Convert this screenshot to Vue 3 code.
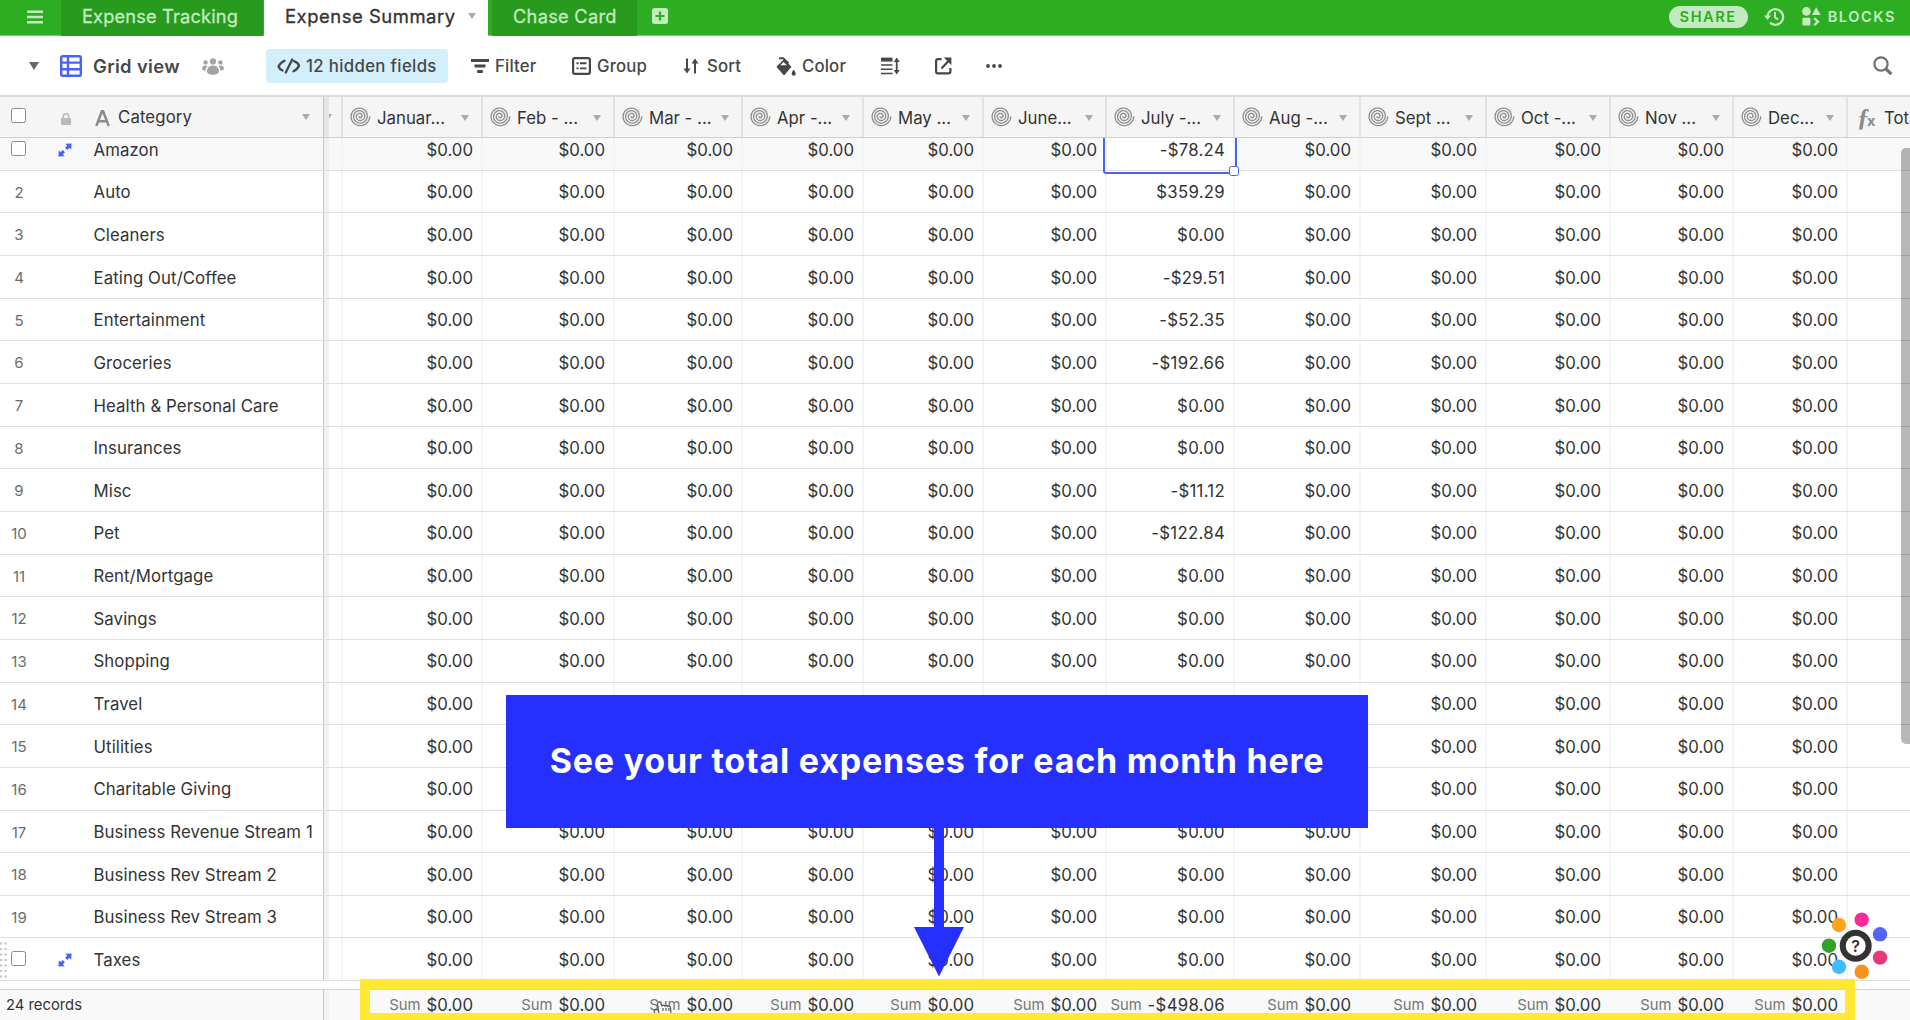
<script setup>
const months = ['Januar...', 'Feb - ...', 'Mar - ...', 'Apr -...', 'May ...', 'June...', 'July -...', 'Aug -...', 'Sept ...', 'Oct -...', 'Nov ...', 'Dec...']
const JULY = 6
const rows = [
  ['Amazon', '-$78.24'], ['Auto', '$359.29'], ['Cleaners'], ['Eating Out/Coffee', '-$29.51'],
  ['Entertainment', '-$52.35'], ['Groceries', '-$192.66'], ['Health & Personal Care'], ['Insurances'],
  ['Misc', '-$11.12'], ['Pet', '-$122.84'], ['Rent/Mortgage'], ['Savings'], ['Shopping'], ['Travel'],
  ['Utilities'], ['Charitable Giving'], ['Business Revenue Stream 1'], ['Business Rev Stream 2'],
  ['Business Rev Stream 3'], ['Taxes'],
].map(([name, july = '$0.00'], i) => ({ name, n: i + 1, hover: i === 0 || i === 19, july }))

const cell = (row, m) => (m === JULY ? row.july : '$0.00')

// Spiral, counter-clockwise, ending on the right-hand side
const spiral = (() => {
  const turns = 3.5
  const pts = []
  for (let i = 0; i <= 120; i++) {
    const u = i / 120
    const a = Math.PI - u * turns * 2 * Math.PI
    const r = 0.5 + 9.2 * Math.pow(u, 0.9)
    pts.push(`${(9.6 + r * Math.cos(a)).toFixed(2)} ${(10 + r * Math.sin(a)).toFixed(2)}`)
  }
  return 'M' + pts.join('L')
})()

const dots = [
  [1839, 925, '#fba51d'], [1861.7, 919.7, '#f82b9b'], [1880, 934.3, '#5464fb'], [1880, 957.6, '#e5397f'],
  [1861.7, 971.8, '#f7921c'], [1839, 966.8, '#43bcff'], [1829, 945.7, '#31a328'],
].map(([x, y, c]) => ({ x: x - 1815, y: y - 905, c }))
</script>

<template>
  <div class="app">
    <header class="top">
      <svg class="burger" width="16" height="14" viewBox="0 0 16 14"><path d="M0 1.7h16M0 7h16M0 12.3h16" /></svg>
      <div class="tab first">Expense Tracking</div>
      <div class="tab active"><span>Expense Summary</span><i class="tri" /></div>
      <div class="tab chase">Chase Card</div>
      <svg class="plus" width="16" height="16" viewBox="0 0 16 16"><rect width="16" height="16" rx="2.5" fill="#c3ebc0" /><path d="M8 3.5v9M3.5 8h9" stroke="#2dad22" stroke-width="2.2" /></svg>
      <div class="right">
        <div class="share">SHARE</div>
        <svg class="hist" width="21" height="20" viewBox="0 0 21 20" fill="none" stroke="#c3ebc0" stroke-width="2.3">
          <path d="M3.5 9.5A7.8 7.8 0 1 1 6 15.7" /><path d="M11 5v5.4l3.2 2" stroke-width="2" /><path d="M0 8.5h7.2L3.6 13z" fill="#c3ebc0" stroke="none" />
        </svg>
        <svg width="19" height="19" viewBox="0 0 19 19" fill="#c3ebc0">
          <circle cx="4.4" cy="4.4" r="4.3" /><path d="M14.2.3l4.5 7.8H9.8z" /><rect x=".4" y="10.8" width="8" height="7.8" rx=".8" /><path d="M12.2 11.2l3.7 3.5-3.7 3.5" fill="none" stroke="#c3ebc0" stroke-width="2.4" />
        </svg>
        <div class="blocks">BLOCKS</div>
      </div>
    </header>

    <nav class="bar">
      <i class="tri dark" />
      <svg class="gridico" width="22" height="22" viewBox="0 0 22 22" fill="none" stroke="#4a63f5" stroke-width="2.4"><rect x="1.2" y="1.2" width="19.6" height="19.6" rx="1.6" /><path d="M1 7.6h20M1 14.2h20M8 1v20" /></svg>
      <b class="view">Grid view</b>
      <svg class="people" width="22" height="17" viewBox="0 0 22 17" fill="#a3a3a3">
        <circle cx="11" cy="3.4" r="3.1" /><circle cx="3.6" cy="4.4" r="2.2" /><circle cx="18.4" cy="4.4" r="2.2" />
        <path d="M5 13.5C5 9.8 7.5 7.6 11 7.6s6 2.2 6 5.9C17 15.5 14.5 16.7 11 16.700s-6-1.2-6-3.2zM0 10.5C0 8.7 1.5 7.6 3.6 7.6c.9 0 1.500.2 2 .5C4.3 9.4 3.7 10.8 3.6 12.7 1.5 12.6 0 12 0 10.5zM22 10.5c0-1.8-1.5-2.9-3.6-2.900-.9 0-1.5.2-2 .5 1.3 1.3 1.9 2.7 2 4.6 2.1-.1 3.6-.7 3.6-2.2z" />
      </svg>
      <div class="hidden">
        <svg width="24" height="16" viewBox="0 0 24 16" fill="none" stroke="#474747" stroke-width="2.3" stroke-linecap="round"><path d="M7.500 2.800Q3 5 1.500 8.500q1 2.600 4 4M17 3.200q4 1.500 5 4.300-1.500 4-5.500 5.700M15.200 1.500L8.800 14.500" /></svg>
        <span>12 hidden fields</span>
      </div>
      <div class="tool filter"><svg width="18" height="14" viewBox="0 0 18 14"><path d="M0 1.5h18M3.5 7h11M6.2 12.5h5.6" stroke="#474747" stroke-width="2.8" /></svg>Filter</div>
      <div class="tool group"><svg width="19" height="18" viewBox="0 0 19 18" fill="none" stroke="#474747" stroke-width="2.2"><rect x="1.1" y="1.1" width="16.8" height="15.8" rx="1.8" /><path d="M4.500 6.300h2M8 6.300h6.500M4.500 11.400h2M8 11.400h6.500" stroke-width="1.9" /></svg>Group</div>
      <div class="tool sort"><svg width="16" height="16" viewBox="0 0 16 16" fill="none" stroke="#474747" stroke-width="2"><path d="M4 .5v12.500M12 15.500V3" /><path d="M.5 10.500h7L4 15.600zM8.500 5.500h7L12 .4z" fill="#474747" stroke="none" /></svg>Sort</div>
      <div class="tool color"><svg width="20" height="19" viewBox="0 0 20 19" fill="#474747"><path d="M.4 9.700L8 2.200 15.500 9.700 8.700 17.700q-.7.700-1.400 0z" /><path d="M3 1.200h4.200l5.300 5.300" fill="none" stroke="#474747" stroke-width="1.900" /><path d="M4.300 8.300L7.600 5l3.200 3.300z" fill="#fff" /><path d="M17.600 12.500q2.200 3 2.200 4.200a2.100 2.100 0 0 1-4.200 0q0-1.200 2-4.200z" /></svg>Color</div>
      <svg class="rowh" width="19" height="18" viewBox="0 0 19 18" fill="none" stroke="#474747"><path d="M0 2.600h11.500" stroke-width="4" /><path d="M0 8h11.500M0 12.200h11.500M0 16.500h11.500" stroke-width="1.4" /><path d="M15.700 2v13.500" stroke-width="1.800" /><path d="M12.700 5L15.700.6 18.700 5zM12.700 13l3 4.400 3-4.400z" fill="#474747" stroke="none" /></svg>
      <svg class="out" width="17" height="18" viewBox="0 0 17 18" fill="none" stroke="#474747" stroke-width="2.2"><path d="M6.500 2.200H3q-1.900 0-1.900 1.900v10.400q0 1.900 1.900 1.900h10.500q1.900 0 1.900-1.900V11M6.500 11.500L13 4.500" /><path d="M8.800.6h7.600v7.600z" fill="#474747" stroke="none" /></svg>
      <svg class="more" width="16" height="4" viewBox="0 0 16 4" fill="#474747"><circle cx="2" cy="2" r="1.9" /><circle cx="8" cy="2" r="1.9" /><circle cx="14" cy="2" r="1.9" /></svg>
      <svg class="search" width="20" height="20" viewBox="0 0 20 20" fill="none" stroke="#6e6e6e"><circle cx="8" cy="8" r="6.6" stroke-width="2.2" /><path d="M12.800 12.800l5.600 5.400" stroke-width="3.2" /></svg>
    </nav>

    <section class="grid head">
      <div class="left">
        <span class="check" />
        <svg class="lock" width="10" height="12" viewBox="0 0 10 12"><rect y="5" width="10" height="7" rx="1" fill="#b9b9b9" /><path d="M2.300 6V3.500a2.700 2.700 0 0 1 5.400 0V6" fill="none" stroke="#b9b9b9" stroke-width="1.5" /></svg>
        <svg class="aico" width="15" height="16" viewBox="0 0 15 16" fill="none" stroke="#8c8c8c" stroke-width="2.5"><path d="M1.300 16L7 1h1l5.700 15M3.300 11.200h8.400" /></svg>
        <span class="cat">Category</span><i class="tri lite" />
      </div>
      <div class="gap"><i class="tri lite cut" /></div>
      <div v-for="m in months" :key="m" class="hc">
        <svg width="21" height="21" viewBox="0 0 20.5 20.5"><path :d="spiral" fill="none" stroke="#8f8f8f" stroke-width="1.3" /></svg>
        <span>{{ m }}</span><i class="tri lite" />
      </div>
      <div class="hc last"><span class="fx">ƒ<sub>x</sub></span><span>Total</span></div>
    </section>

    <section class="body">
      <div class="rows">
        <div v-for="(r, i) in rows" :key="r.n" class="grid row" :class="{ sel: i === 0 }">
          <div class="left">
            <svg v-if="i === 19" class="grip" width="8" height="38" viewBox="0 0 8 38"><g fill="#c9c9c9"><template v-for="k in 7" :key="k"><circle cx="1" :cy="k * 5.5 - 3" r="1.3" /><circle cx="5.5" :cy="k * 5.5 - 3" r="1.3" /></template></g></svg>
            <span v-if="r.hover" class="check" />
            <span v-else class="num">{{ r.n }}</span>
            <svg v-if="r.hover" class="exp" width="14" height="14" viewBox="0 0 14 14"><path d="M7.500 .8L13.600 .4 13.200 6.500 11.200 4.900 9.200 6.900 7.100 4.800 9.100 2.800zM6.500 13.200L.4 13.600 .8 7.500 2.800 9.100 4.800 7.100 6.900 9.200 4.900 11.200z" fill="#4a63f5" /></svg>
            <span class="name">{{ r.name }}</span>
          </div>
          <div class="gap" />
          <div v-for="(m, j) in months" :key="m" class="c" :class="{ pick: i === 0 && j === JULY, july: j === JULY }">{{ cell(r, j) }}<i v-if="i === 0 && j === JULY" class="frame" /></div>
          <div class="c last" />
        </div>
      </div>
    </section>

    <footer class="grid foot">
      <div class="left">24 records</div>
      <div class="gap" />
      <div v-for="(m, j) in months" :key="m" class="c"><small>Sum</small><span :class="{ july: j === JULY }">{{ j === JULY ? '-$498.06' : '$0.00' }}</span></div>
      <div />
    </footer>

    <div class="scroll" />
    <svg class="help" width="80" height="80" viewBox="0 0 80 80">
      <circle v-for="d in dots" :key="d.c" :cx="d.x" :cy="d.y" r="7.2" :fill="d.c" />
      <circle cx="40.7" cy="40.7" r="13" fill="#fff" stroke="#333" stroke-width="6" />
      <text x="40.7" y="46.5" text-anchor="middle">?</text>
    </svg>
    <svg class="hand" width="22" height="13" viewBox="0 0 22 13" fill="#fff" stroke="#555" stroke-width="1.2"><path d="M6 13L4.500 2.500q.5-2 2-1.500T9 5l1-.8q1.500-.5 2 1l1-.7q1.500-.3 1.800 1l1-.5q1.500 0 1.700 1.500L18 13M5 9Q1.500 8 1 10.500L2.500 13M10 7v3M13 7v3M16 7v3" /></svg>
    <div class="ybox" />
    <div class="callout"><span>See your total expenses for each month here</span></div>
    <svg class="arrow" width="50" height="149" viewBox="0 0 50 149" fill="#2530ff"><path d="M20 0h10v99h20L25 148.500 0 99h20z" /></svg>
  </div>
</template>

<style>
body { overflow: hidden; }
</style>
<style scoped>
* { box-sizing: border-box; }
.app { position: relative; width: 1910px; height: 1020px; overflow: hidden; background: #fff; color: #333; font: 16.8px Inter, "Liberation Sans", sans-serif; white-space: nowrap; display: flex; flex-direction: column; }
svg { display: block; flex: none; }
.top { height: 36px; flex: none; display: flex; align-items: center; background: #2dad22; border-bottom: 1px solid #7bc975; }
.burger { margin: 0 18px 2px 27px; stroke: #c3ebc0; stroke-width: 2.6; }
.tab { height: 36px; line-height: 32px; font-size: 18.2px; background: #289b1e; color: #c3ebc0; -webkit-text-stroke: .3px; letter-spacing: .18px; }
.first { width: 202px; padding-left: 21px; margin-right: 1px; }
.active { width: 224px; background: #fff; color: #333; padding: 0 0 3px 21px; margin-right: 4px; display: flex; align-items: center; gap: 12px; font-size: 18.4px; letter-spacing: .55px; }
.chase { width: 145px; padding-left: 21px; letter-spacing: .3px; }
.plus { margin: 0 0 3px 15px; }
.right { margin-left: auto; margin-bottom: 2px; display: flex; align-items: center; color: #c3ebc0; font-size: 14.6px; font-weight: 600; letter-spacing: 1.55px; }
.share { width: 79px; height: 22px; line-height: 22px; border-radius: 11px; background: #c3ebc0; color: #2dad22; text-align: center; }
.hist { margin: 0 17px 0 16px; }
.blocks { margin: 0 14px 0 7px; }
.tri { flex: none; width: 0; height: 0; border: 4.5px solid transparent; border-top: 6px solid #aaa; border-bottom: 0; }
.tri.dark { border-width: 8px 5.5px 0; border-top-color: #666; margin-left: 29px; }
.bar { height: 59px; flex: none; display: flex; align-items: center; font-size: 16.8px; font-weight: 500; color: #474747; padding-top: 1px; letter-spacing: .15px; }
.gridico { margin: 0 11px 0 21px; }
.view { width: 88px; font-size: 18.4px; font-weight: 600; letter-spacing: .35px; }
.people { margin-left: 21px; }
.hidden { display: flex; align-items: center; width: 182px; height: 34px; margin-left: 42px; padding-left: 11px; gap: 5px; border-radius: 4px; background: #d3effc; letter-spacing: .33px; }
.tool { display: flex; align-items: center; gap: 6px; }
.filter { width: 101px; margin-left: 23px; }
.group { width: 111px; }
.sort { width: 93px; gap: 8px; }
.color { width: 105px; }
.out { margin-left: 35px; }
.more { margin-left: 34px; }
.search { margin-left: auto; margin-right: 17px; }
.grid { display: grid; grid-template-columns: 324px 19px 140px 132px 128px 121px 120px 123px 128px 126px 126px 124px 123px 114px 1fr; }
.head { height: 43px; flex: none; background: #f5f5f5; border-top: 2px solid #dadada; border-bottom: 1px solid #cfcfcf; }
.left { display: flex; align-items: center; border-right: 1px solid #c6c6c6; }
.check { flex: none; width: 15px; height: 15px; margin-left: 11px; border: 1px solid #8a8a8a; border-radius: 2.5px; background: #fff; }
.head .check { margin-bottom: 3px; }
.lock { margin: 4px 0 0 35px; }
.aico { margin: 2px 0 0 24px; }
.cat { margin-left: 8px; width: 184px; letter-spacing: .12px; }
.gap { border-right: 2px solid #f4f4f4; border-left: 5px solid #f1f1f1; overflow: hidden; }
.head .gap { border-right-color: #e2e2e2; border-left-color: #e6e6e6; display: flex; align-items: center; }
.cut { margin-left: -5px; }
.hc { display: flex; align-items: center; border-right: 2px solid #e2e2e2; padding: 1px 12px 0 8px; min-width: 0; overflow: hidden; }
.hc svg { margin-right: 6px; margin-left: -1px; margin-top: -2px; }
.hc .tri { margin-left: auto; }
.hc.last, .c.last { border: 0; }
.hc.last { padding-right: 0; }
.fx { flex: none; position: relative; width: 28px; color: #8c8c8c; font: italic bold 25px "Liberation Serif", serif; line-height: 24px; padding-left: 1px; }
.fx sub { position: absolute; left: 11px; top: 7px; font: bold 14.5px/16px Inter, sans-serif; }
.body { height: 851px; flex: none; overflow: hidden; }
.rows { margin-top: -10px; }
.row { height: 42.67px; border-bottom: 1px solid #dfdfdf; }
.row > * { padding-top: 1.5px; }
.sel { background: #f8f8f8; }
.row .check { margin-bottom: 3px; }
.num { width: 38px; text-align: center; font-size: 15px; color: #6b6b6b; }
.exp { margin-left: 32px; }
.name { margin-left: 21.5px; letter-spacing: .09px; }
.num + .name { margin-left: 55.5px; }
.grip { position: absolute; left: 0; }
.c { position: relative; display: flex; align-items: center; justify-content: flex-end; padding-right: 8px; border-right: 2px solid #f4f4f4; }
.july { letter-spacing: .28px; }
.pick { background: #fff; }
.frame { position: absolute; left: -4px; top: 0; right: -4px; bottom: -4px; border: 2px solid #4a63f5; border-radius: 3px; z-index: 1; }
.frame::after { content: ""; position: absolute; right: -4px; bottom: -4px; width: 10px; height: 10px; background: #fff; border: 1px solid #4a63f5; border-radius: 2.5px; box-sizing: border-box; }
.foot { height: 31px; flex: none; background: #f9f9f9; border-top: 1px solid #d4d4d4; }
.foot .left { font-size: 14.8px; padding-left: 6px; }
.foot .gap, .foot .c { border-color: transparent; }
.foot .gap { border-left-color: #f3f3f3; }
small { font-size: 14.8px; color: #757575; margin-right: 6px; }
.scroll { position: absolute; left: 1901px; top: 148px; width: 14px; height: 596px; border-radius: 5px; background: rgba(0, 0, 0, .28); }
.help { position: absolute; left: 1815px; top: 905px; }
.help text { font: 600 16px Inter, sans-serif; fill: #333; }
.hand { position: absolute; left: 653px; top: 1001px; }
.ybox { position: absolute; left: 360px; top: 979px; width: 1495px; height: 44px; border: 10px solid #ffe932; }
.callout { position: absolute; left: 506px; top: 695px; width: 862px; height: 133px; background: #2530ff; color: #fff; font-size: 34px; font-weight: 700; letter-spacing: .8px; padding-bottom: 2px; display: flex; align-items: center; justify-content: center; }
.arrow { position: absolute; left: 914px; top: 828px; }
</style>
